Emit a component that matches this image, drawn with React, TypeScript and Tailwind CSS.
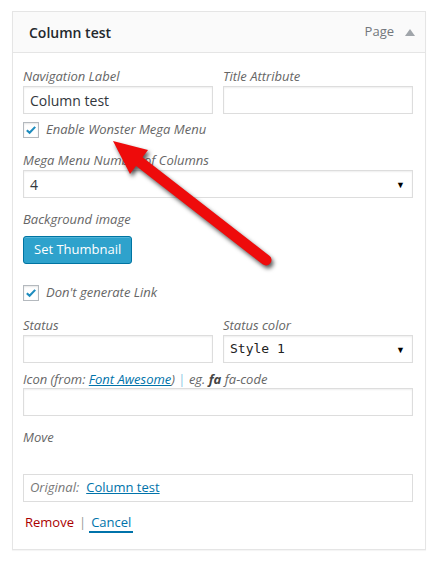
const label = "block text-[13px] leading-[18px] italic text-[#666]";
const input =
  "h-[28px] border border-[#ddd] bg-white shadow-[inset_0_1px_2px_rgba(0,0,0,0.07)]";

function Checkbox() {
  return (
    <span className="w-4 h-4 shrink-0 border border-[#b4b9be] bg-white shadow-[inset_0_1px_2px_rgba(0,0,0,0.1)] flex items-center justify-center">
      <svg viewBox="0 0 16 16" className="w-[14px] h-[14px]">
        <path d="M3.2 8.2 L6.4 11.2 L12.8 4.4" fill="none" stroke="#1e8cbe" strokeWidth="2.4" strokeLinejoin="miter" />
      </svg>
    </span>
  );
}

function Select({ value, mono }: { value: string; mono?: boolean }) {
  return (
    <div className={`${input} flex items-center justify-between pl-[6px] pr-[7px]`}>
      <span
        className={
          mono
            ? "text-[13px] text-[#222] font-['DejaVu_Sans_Mono',monospace]"
            : "text-[14px] text-[#32373c]"
        }
      >
        {value}
      </span>
      <span className="text-[9px] text-black leading-none">▼</span>
    </div>
  );
}

export default function App() {
  return (
    <div className="relative w-[438px] h-[564px] bg-white pt-[11px] font-['Open_Sans','Liberation_Sans',sans-serif]">
      <div className="ml-[12px] w-[414px] border border-[#e5e5e5] shadow-[0_1px_1px_rgba(0,0,0,0.04)]">
        {/* Header */}
        <div className="h-[41px] bg-[#fafafa] border-b border-[#e5e5e5] flex items-center justify-between pl-[16px] pr-[10px]">
          <span className="text-[14px] font-semibold text-[#23282d]">Column test</span>
          <div className="flex items-center gap-[11px]">
            <span className="text-[13px] text-[#72777c]">Page</span>
            <svg width="10" height="7" viewBox="0 0 10 7">
              <polygon points="5,0 10,7 0,7" fill="#a0a5aa" />
            </svg>
          </div>
        </div>

        {/* Body */}
        <div className="pl-[10px] pr-[12px] pt-[14px] pb-[17px]">
          <div className="flex gap-[10px]">
            <div className="w-[190px]">
              <span className={label}>Navigation Label</span>
              <div className={`${input} mt-[1px] flex items-center px-[6px] text-[14px] text-[#32373c]`}>Column test</div>
            </div>
            <div className="w-[190px]">
              <span className={label}>Title Attribute</span>
              <div className={`${input} mt-[1px]`} />
            </div>
          </div>

          <div className="mt-[7px] h-[18px] flex items-center gap-[7px]">
            <Checkbox />
            <span className="text-[13px] italic text-[#666]">Enable Wonster Mega Menu</span>
          </div>

          <div className="mt-[12px] w-[390px]">
            <span className={label}>Mega Menu Number of Columns</span>
            <div className="mt-[1px]">
              <Select value="4" />
            </div>
          </div>

          <span className={`${label} mt-[12px]`}>Background image</span>
          <button className="mt-[8px] h-[28px] px-[10px] rounded-[3px] bg-[#2ea2cc] border border-[#0074a2] text-white text-[13px] shadow-[inset_0_1px_0_rgba(120,200,230,0.5)]">
            Set Thumbnail
          </button>

          <div className="mt-[20px] h-[18px] flex items-center gap-[7px]">
            <Checkbox />
            <span className="text-[13px] italic text-[#666]">Don't generate Link</span>
          </div>

          <div className="mt-[14px] flex gap-[10px]">
            <div className="w-[190px]">
              <span className={label}>Status</span>
              <div className={`${input} mt-[1px]`} />
            </div>
            <div className="w-[190px]">
              <span className={label}>Status color</span>
              <div className="mt-[1px]">
                <Select value="Style 1" mono />
              </div>
            </div>
          </div>

          <div className="mt-[7px] w-[390px]">
            <span className={label}>
              Icon (from: <span className="text-[#0073aa] underline">Font Awesome</span>){" "}
              <span className="not-italic text-[#8cc8e4]">|</span> eg. <b className="font-bold text-[#444]">fa</b> fa-code
            </span>
            <div className={`${input}`} />
          </div>

          <span className={`${label} mt-[12px]`}>Move</span>

          <div className="mt-[28px] w-[390px] h-[28px] border border-[#ddd] flex items-center pl-[6px] gap-[7px] text-[13px]">
            <span className="italic text-[#777]">Original:</span>
            <span className="text-[#0073aa] underline">Column test</span>
          </div>

          <div className="mt-[12px] h-[18px] flex items-center text-[13px] pl-[2px]">
            <span className="text-[#a00]">Remove</span>
            <span className="text-[#999] ml-[5px] mr-[3px]">|</span>
            <span className="text-[#0073aa] border-b-2 border-[#0073aa] leading-[17px] px-[2px]">Cancel</span>
          </div>
        </div>
      </div>

      {/* Red annotation arrow */}
      <svg
        className="absolute left-0 top-0 pointer-events-none drop-shadow-[2px_3px_2px_rgba(0,0,0,0.65)]"
        width="438"
        height="564"
      >
        <line x1="136" y1="159" x2="266" y2="260" stroke="#ee0b0b" strokeWidth="11" strokeLinecap="round" />
        <polygon points="113,141 148,150 130,174" fill="#ee0b0b" />
      </svg>
    </div>
  );
}
